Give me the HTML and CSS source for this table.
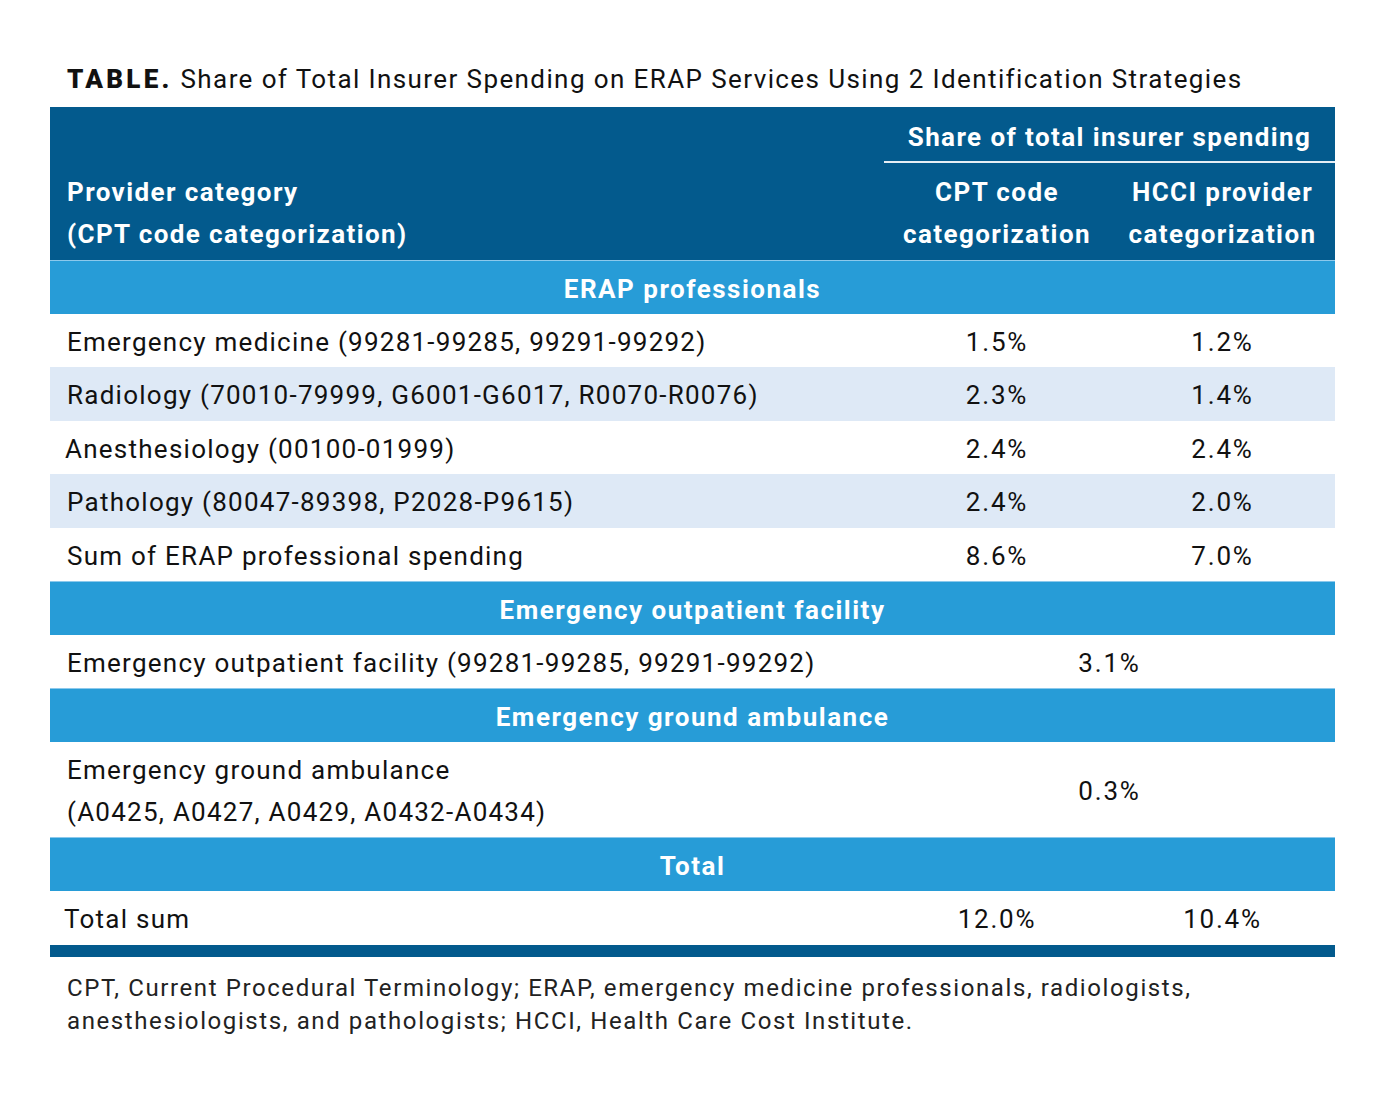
FILE: index.html
```html
<!DOCTYPE html>
<html>
<head>
<meta charset="utf-8">
<link rel="stylesheet" href="styles.css">
</head>
<body>
<div class="page">
  <h1 class="title"><span class="label">TABLE.</span> Share of Total Insurer Spending on ERAP Services Using 2 Identification Strategies</h1>
  <table class="tbl">
    <colgroup>
      <col class="c1"><col class="c2"><col class="c3">
    </colgroup>
    <thead>
      <tr class="h1row">
        <th class="prov" rowspan="2">Provider category<br>(CPT code categorization)</th>
        <th class="share" colspan="2"><span>Share of total insurer spending</span></th>
      </tr>
      <tr class="h2row">
        <th class="sub">CPT code<br>categorization</th>
        <th class="sub">HCCI provider<br>categorization</th>
      </tr>
    </thead>
    <tbody>
      <tr class="band"><td colspan="3">ERAP professionals</td></tr>
      <tr><td class="name">Emergency medicine (99281-99285, 99291-99292)</td><td class="num">1.5%</td><td class="num">1.2%</td></tr>
      <tr class="alt"><td class="name">Radiology (70010-79999, G6001-G6017, R0070-R0076)</td><td class="num">2.3%</td><td class="num">1.4%</td></tr>
      <tr><td class="name shift">Anesthesiology (00100-01999)</td><td class="num">2.4%</td><td class="num">2.4%</td></tr>
      <tr class="alt"><td class="name">Pathology (80047-89398, P2028-P9615)</td><td class="num">2.4%</td><td class="num">2.0%</td></tr>
      <tr><td class="name">Sum of ERAP professional spending</td><td class="num">8.6%</td><td class="num">7.0%</td></tr>
      <tr class="band"><td colspan="3">Emergency outpatient facility</td></tr>
      <tr><td class="name">Emergency outpatient facility (99281-99285, 99291-99292)</td><td class="num" colspan="2">3.1%</td></tr>
      <tr class="band"><td colspan="3">Emergency ground ambulance</td></tr>
      <tr class="tall"><td class="name">Emergency ground ambulance<br>(A0425, A0427, A0429, A0432-A0434)</td><td class="num" colspan="2">0.3%</td></tr>
      <tr class="band"><td colspan="3">Total</td></tr>
      <tr class="last"><td class="name shift2">Total sum</td><td class="num">12.0%</td><td class="num">10.4%</td></tr>
    </tbody>
  </table>
  <div class="endbar"></div>
  <p class="note">CPT, Current Procedural Terminology; ERAP, emergency medicine professionals, radiologists,<br>anesthesiologists, and pathologists; HCCI, Health Care Cost Institute.</p>
</div>
</body>
</html>
```

FILE: styles.css
```css
html, body {
  margin: 0;
  padding: 0;
  background: #ffffff;
}
body {
  font-family: Roboto, "Liberation Sans", sans-serif;
  color: #111111;
}
.page {
  width: 1285px;
  padding: 58px 0 0 50px;
}
.title {
  margin: 0;
  padding: 0 0 0 17px;
  height: 49px;
  font-size: 26px;
  font-weight: 400;
  line-height: 42px;
  letter-spacing: 1.4px;
  color: #111;
}
.title .label {
  font-weight: 900;
  letter-spacing: 3.3px;
}
.tbl {
  width: 1285px;
  border-collapse: collapse;
  border-spacing: 0;
  table-layout: fixed;
}
.c1 { width: 834px; }
.c2 { width: 226px; }
.c3 { width: 225px; }
.tbl th, .tbl td {
  padding: 0;
}
thead th {
  background: #035a8d;
  color: #ffffff;
  font-weight: 700;
  font-size: 26px;
  line-height: 42px;
  letter-spacing: 1.4px;
}
.h1row { height: 55px; }
.h2row { height: 98px; }
.prov {
  text-align: left;
  vertical-align: bottom;
  padding: 0 0 5px 17px !important;
}
.share {
  vertical-align: top;
  padding-top: 9px !important;
  text-align: center;
  border-bottom: 2px solid #e6eef5;
}
.sub {
  text-align: center;
  vertical-align: bottom;
  padding-bottom: 5px !important;
}
tbody tr { height: 53.5px; }
tbody td {
  font-size: 26px;
  line-height: 42px;
  vertical-align: middle;
  letter-spacing: 1.25px;
  padding-top: 3px !important;
}
.band td {
  background: #279cd7;
  color: #ffffff;
  font-weight: 700;
  text-align: center;
  letter-spacing: 1.5px;
  border-top: 1px solid #8cc9ec;
}
.alt td {
  background: #dee9f6;
}
.name {
  padding-left: 17px !important;
  text-align: left;
}
.shift { padding-left: 15px !important; }
.shift2 { padding-left: 14px !important; }
.num {
  text-align: center;
  letter-spacing: 1.8px;
}
.tall { height: 96px; }
.endbar {
  height: 12px;
  background: #035a8d;
}
.note {
  margin: 15px 0 0 17px;
  font-size: 24px;
  line-height: 33px;
  letter-spacing: 1.6px;
  color: #222;
}
```
